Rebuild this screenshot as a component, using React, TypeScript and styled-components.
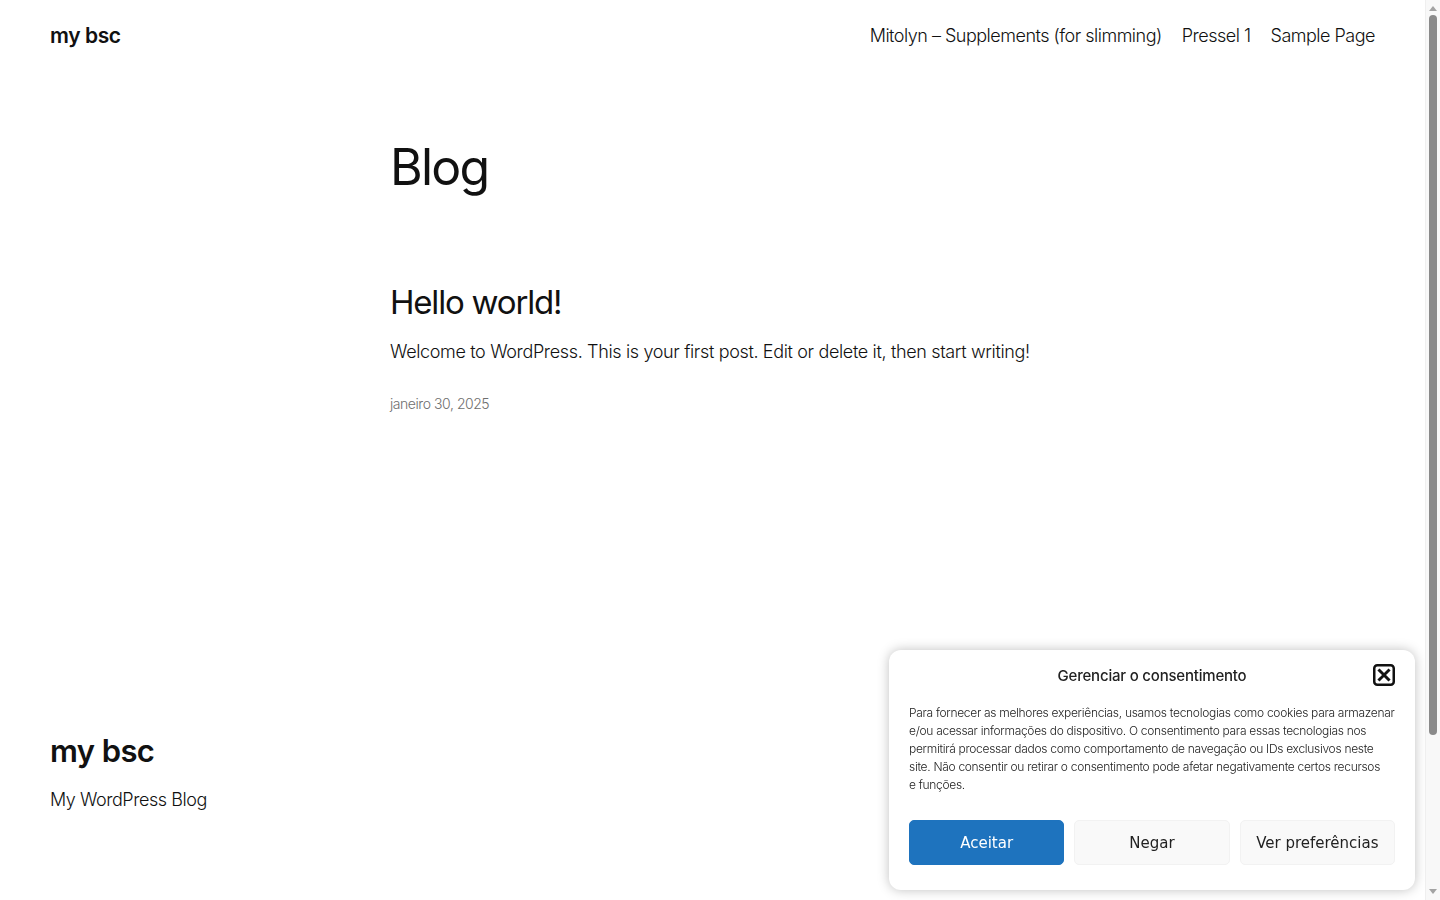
import styled, { createGlobalStyle } from "styled-components";

const GlobalStyle = createGlobalStyle`
  html, body {
    margin: 0;
    padding: 0;
    background: #ffffff;
  }
  body {
    padding-right: 15px;
    font-family: Inter, "Noto Sans", sans-serif;
    color: #111111;
    -webkit-font-smoothing: antialiased;
  }
  * {
    box-sizing: border-box;
  }
`;

const navItems = ["Mitolyn – Supplements (for slimming)", "Pressel 1", "Sample Page"];

const consentText =
  "Para fornecer as melhores experiências, usamos tecnologias como cookies para armazenar e/ou acessar informações do dispositivo. O consentimento para essas tecnologias nos permitirá processar dados como comportamento de navegação ou IDs exclusivos neste site. Não consentir ou retirar o consentimento pode afetar negativamente certos recursos e\u00a0funções.";

export default function App() {
  return (
    <>
      <GlobalStyle />
      <Page>
        <Header>
          <SiteTitle href="#">my bsc</SiteTitle>
          <Nav>
            {navItems.map((item) => (
              <NavLink key={item} href="#">
                {item}
              </NavLink>
            ))}
          </Nav>
        </Header>

        <Main>
          <PageTitle>Blog</PageTitle>
          <Post>
            <PostTitle>Hello world!</PostTitle>
            <Excerpt>Welcome to WordPress. This is your first post. Edit or delete it, then start writing!</Excerpt>
            <PostDate>janeiro 30, 2025</PostDate>
          </Post>
        </Main>

        <Footer>
          <FooterTitle>my bsc</FooterTitle>
          <Tagline>My WordPress Blog</Tagline>
        </Footer>
      </Page>

      <Consent>
        <ConsentHead>
          <ConsentTitle>Gerenciar o consentimento</ConsentTitle>
          <CloseButton aria-label="Fechar">
            <svg width="22" height="22" viewBox="0 0 22 22">
              <rect x="1.25" y="1.25" width="19.5" height="19.5" rx="3" fill="none" stroke="#111" strokeWidth="2.5" />
              <path d="M6.5 6.5 L15.5 15.5 M15.5 6.5 L6.5 15.5" stroke="#111" strokeWidth="3" strokeLinecap="square" />
            </svg>
          </CloseButton>
        </ConsentHead>
        <ConsentBody>{consentText}</ConsentBody>
        <ConsentActions>
          <ConsentButton $primary>Aceitar</ConsentButton>
          <ConsentButton>Negar</ConsentButton>
          <ConsentButton>Ver preferências</ConsentButton>
        </ConsentActions>
      </Consent>

      {/* window scrollbar */}
      <ScrollTrack>
        <ScrollArrow viewBox="0 0 8 5">
          <path d="M0 5 L4 0 L8 5 Z" fill="#a3a3a3" />
        </ScrollArrow>
        <ScrollThumb />
        <ScrollArrow viewBox="0 0 8 5">
          <path d="M0 0 L8 0 L4 5 Z" fill="#a3a3a3" />
        </ScrollArrow>
      </ScrollTrack>
    </>
  );
}

const Page = styled.div`
  display: flex;
  flex-direction: column;
  min-height: 1100px;
`;

const Header = styled.header`
  display: flex;
  align-items: center;
  justify-content: space-between;
  height: 71px;
  padding: 0 50px;
`;

const SiteTitle = styled.a`
  font-size: 21px;
  font-weight: 600;
  letter-spacing: -0.4px;
  color: #111111;
  text-decoration: none;
`;

const Nav = styled.nav`
  display: flex;
  gap: 20px;
`;

const NavLink = styled.a`
  font-size: 18px;
  font-weight: 300;
  letter-spacing: -0.5px;
  color: #111111;
  text-decoration: none;
`;

const Main = styled.main`
  width: 645px;
  margin: 0 auto;
  padding-top: 66px;
  flex: 1;
`;

const PageTitle = styled.h1`
  margin: 0;
  font-size: 50px;
  font-weight: 400;
  line-height: 1.2;
  letter-spacing: -1.8px;
`;

const Post = styled.article`
  margin-top: 86px;
`;

const PostTitle = styled.h2`
  margin: 0;
  font-size: 33px;
  font-weight: 400;
  line-height: 1.2;
  letter-spacing: -1.2px;
`;

const Excerpt = styled.p`
  margin: 15px 0 0;
  font-size: 18px;
  font-weight: 300;
  line-height: 1.55;
  letter-spacing: -0.35px;
`;

const PostDate = styled.div`
  margin-top: 30px;
  font-size: 14px;
  font-weight: 300;
  color: #6e6e6e;
  letter-spacing: -0.45px;
`;

const Footer = styled.footer`
  padding: 0 50px 290px;
`;

const FooterTitle = styled.div`
  font-size: 31px;
  font-weight: 600;
  letter-spacing: -0.6px;
  line-height: 1.2;
`;

const Tagline = styled.p`
  margin: 20px 0 0;
  font-size: 18px;
  font-weight: 300;
  letter-spacing: -0.45px;
`;

const Consent = styled.div`
  position: fixed;
  right: 25px;
  bottom: 10px;
  width: 526px;
  padding: 13px 20px 25px;
  background: #ffffff;
  border-radius: 12px;
  box-shadow: 0 0 12px rgba(0, 0, 0, 0.25);
`;

const ConsentHead = styled.div`
  position: relative;
  display: flex;
  justify-content: center;
  align-items: center;
  height: 24px;
`;

const ConsentTitle = styled.h3`
  margin: 0;
  font-size: 15px;
  font-weight: 500;
  letter-spacing: -0.2px;
  color: #222222;
`;

const CloseButton = styled.button`
  position: absolute;
  right: 0;
  top: 1px;
  padding: 0;
  border: 0;
  background: none;
  display: flex;
`;

const ConsentBody = styled.p`
  margin: 17px 0 0;
  font-size: 12px;
  font-weight: 300;
  line-height: 18px;
  letter-spacing: -0.3px;
  color: #222222;
`;

const ConsentActions = styled.div`
  display: grid;
  grid-template-columns: repeat(3, 1fr);
  gap: 10px;
  margin-top: 26px;
`;

const ConsentButton = styled.button<{ $primary?: boolean }>`
  height: 45px;
  border-radius: 5px;
  font-family: "DejaVu Sans", sans-serif;
  font-size: 15px;
  border: 1px solid ${(p) => (p.$primary ? "#1e73be" : "#f2f2f2")};
  background: ${(p) => (p.$primary ? "#1e73be" : "#f9f9f9")};
  color: ${(p) => (p.$primary ? "#ffffff" : "#222222")};
`;

const ScrollTrack = styled.div`
  position: fixed;
  top: 0;
  right: 0;
  bottom: 0;
  width: 15px;
  display: flex;
  flex-direction: column;
  align-items: center;
  padding: 6px 0;
  gap: 4px;
  background: #f8f8f8;
  border-left: 1px solid #efefef;
`;

const ScrollArrow = styled.svg`
  width: 8px;
  height: 5px;
  flex: none;
`;

const ScrollThumb = styled.div`
  width: 8px;
  height: 720px;
  border-radius: 4px;
  background: #8a8a8a;
  margin-bottom: auto;
`;
